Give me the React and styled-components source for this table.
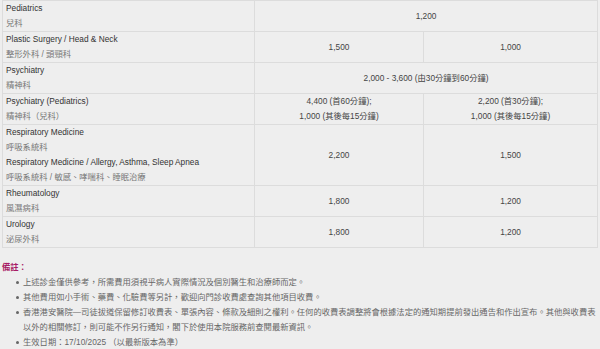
import React from "react";
import styled, { createGlobalStyle } from "styled-components";

const GlobalStyle = createGlobalStyle`
  html, body {
    margin: 0;
    padding: 0;
    background: #eeeeee;
  }
  body {
    font-family: "Liberation Sans", Arial, "Noto Sans CJK TC", sans-serif;
    font-size: 8.3px;
    color: #333;
  }
`;

const rows = [
  { en: ["Pediatrics"], zh: ["兒科"], fee: ["1,200"] },
  { en: ["Plastic Surgery / Head & Neck"], zh: ["整形外科 / 頭頸科"], fee: ["1,500", "1,000"] },
  { en: ["Psychiatry"], zh: ["精神科"], fee: ["2,000 - 3,600 (由30分鐘到60分鐘)"] },
  {
    en: ["Psychiatry (Pediatrics)"],
    zh: ["精神科（兒科）"],
    fee: [
      ["4,400 (首60分鐘);", "1,000 (其後每15分鐘)"],
      ["2,200 (首30分鐘);", "1,000 (其後每15分鐘)"],
    ],
  },
  {
    en: ["Respiratory Medicine", "Respiratory Medicine / Allergy, Asthma, Sleep Apnea"],
    zh: ["呼吸系統科", "呼吸系統科 / 敏感、哮喘科、睡眠治療"],
    fee: ["2,200", "1,500"],
  },
  { en: ["Rheumatology"], zh: ["風濕病科"], fee: ["1,800", "1,200"] },
  { en: ["Urology"], zh: ["泌尿外科"], fee: ["1,800", "1,200"] },
];

const notes = [
  "上述診金僅供參考，所需費用須視乎病人實際情況及個別醫生和治療師而定。",
  "其他費用如小手術、藥費、化驗費等另計，歡迎向門診收費處查詢其他項目收費。",
  "香港港安醫院—司徒拔道保留修訂收費表、單張內容、條款及細則之權利。任何的收費表調整將會根據法定的通知期提前發出通告和作出宣布。其他與收費表以外的相關修訂，則可能不作另行通知，閣下於使用本院服務前查閱最新資訊。",
  "生效日期：17/10/2025 （以最新版本為準）",
];

const Page = styled.div`
  padding: 0 3px 0 2px;
`;

const Table = styled.table`
  width: 595px;
  border-collapse: collapse;
  table-layout: fixed;
  background: #eeeeee;
  border: 1px solid #dcdcdc;
`;

const Cell = styled.td`
  border: 1px solid #dcdcdc;
  padding: 0 3px;
  line-height: 15px;
  vertical-align: middle;
  text-align: ${(p) => (p.$center ? "center" : "left")};
  color: ${(p) => (p.$center ? "#444" : "#333")};
`;

const Line = styled.div`
  color: ${(p) => (p.$zh ? "#777" : "#333")};
  white-space: nowrap;
`;

const Notes = styled.section`
  margin-top: 12px;
`;

const NotesTitle = styled.div`
  color: #a81c66;
  font-weight: bold;
  line-height: 15px;
`;

const NoteList = styled.ul`
  list-style: none;
  margin: 0;
  padding: 0 0 0 21px;
  width: 574px;
`;

const NoteItem = styled.li`
  position: relative;
  color: #666;
  line-height: 15px;
  &::before {
    content: "";
    position: absolute;
    left: -7px;
    top: 6px;
    width: 3px;
    height: 3px;
    border-radius: 50%;
    background: #666;
  }
`;

const Fee = ({ value }) =>
  Array.isArray(value) ? value.map((v) => <div key={v}>{v}</div>) : value;

export default function App() {
  return (
    <Page>
      <GlobalStyle />
      <Table>
        <colgroup>
          <col style={{ width: 252 }} />
          <col style={{ width: 169 }} />
          <col style={{ width: 174 }} />
        </colgroup>
        <tbody>
          {rows.map((r, i) => (
            <tr key={i}>
              <Cell>
                {r.en.map((en, j) => (
                  <React.Fragment key={j}>
                    <Line>{en}</Line>
                    <Line $zh>{r.zh[j]}</Line>
                  </React.Fragment>
                ))}
              </Cell>
              {r.fee.length === 1 ? (
                <Cell $center colSpan={2}>
                  <Fee value={r.fee[0]} />
                </Cell>
              ) : (
                r.fee.map((f, j) => (
                  <Cell $center key={j}>
                    <Fee value={f} />
                  </Cell>
                ))
              )}
            </tr>
          ))}
        </tbody>
      </Table>
      <Notes>
        <NotesTitle>備註：</NotesTitle>
        <NoteList>
          {notes.map((n) => (
            <NoteItem key={n}>{n}</NoteItem>
          ))}
        </NoteList>
      </Notes>
    </Page>
  );
}
